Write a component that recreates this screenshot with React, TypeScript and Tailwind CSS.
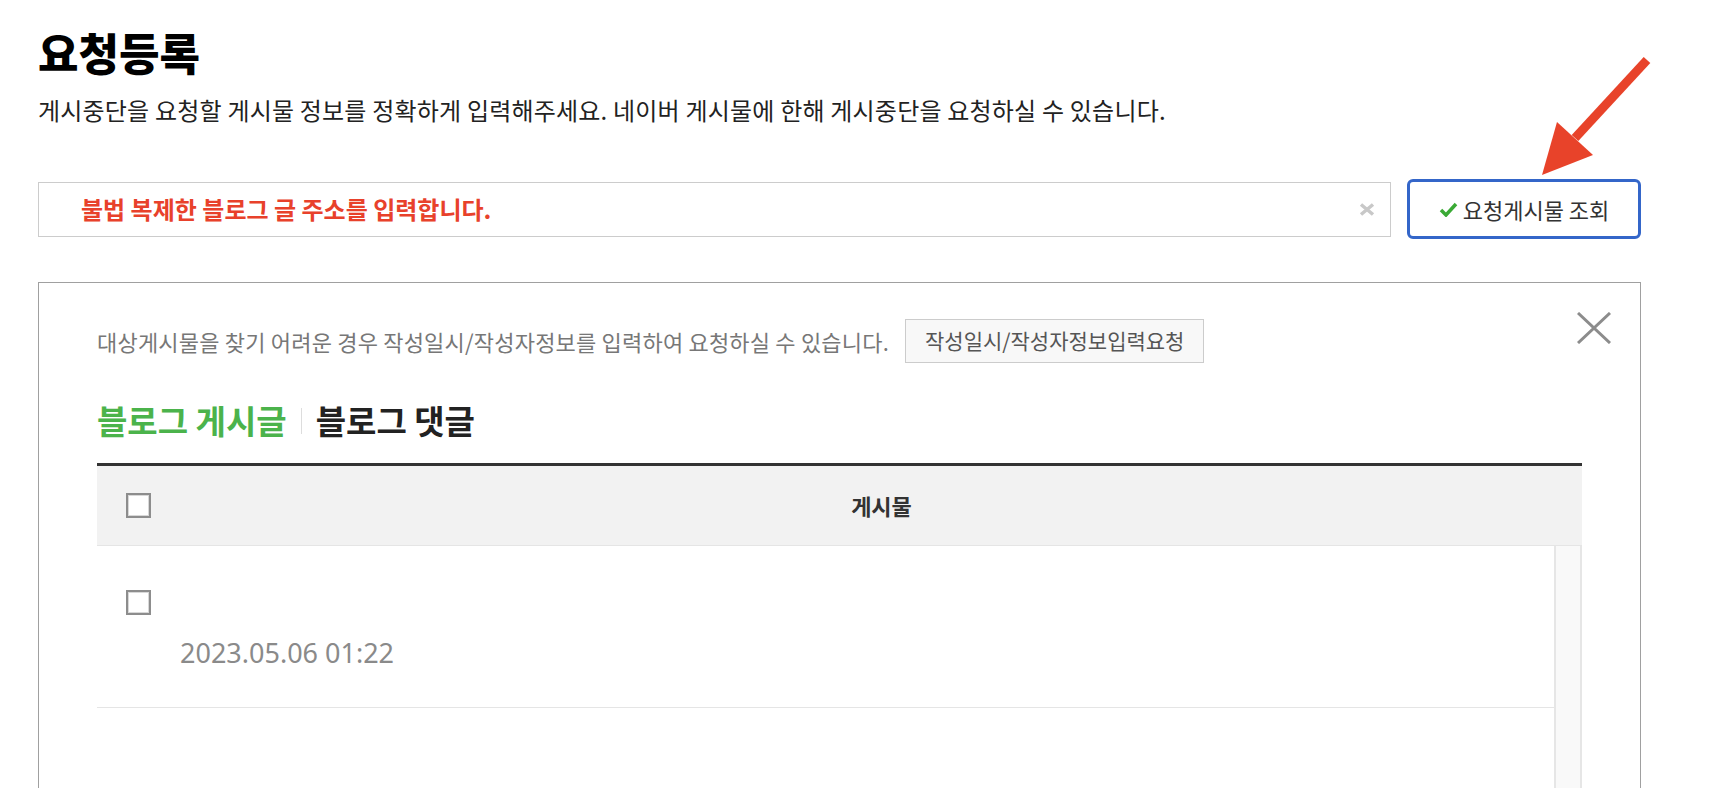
import React from "react";

function Checkbox() {
  return (
    <div className="w-[25px] h-[25px] border-2 border-[#8d8d8d] bg-white shadow-[inset_0_0_0_1px_#d8d8d8]" />
  );
}

export default function App() {
  return (
    <div className="relative min-h-screen bg-white pl-[38px] pr-[71px] pt-[22px] text-[#222] font-['Noto_Sans_CJK_KR','Noto_Sans',sans-serif]">
      {/* Header */}
      <h1 className="text-[44px] font-extrabold leading-[60px] text-black">요청등록</h1>
      <p className="mt-[13px] text-[24px] leading-[30px] tracking-[0.2px] text-[#222]">
        게시중단을 요청할 게시물 정보를 정확하게 입력해주세요. 네이버 게시물에 한해 게시중단을 요청하실 수 있습니다.
      </p>

      {/* URL input row */}
      <div className="mt-[54px] flex h-[60px] items-center gap-[16px]">
        <div className="flex h-[55px] flex-1 items-center border border-[#cccccc] pl-[42px] pr-[15px]">
          <span className="text-[24px] font-bold text-[#e8412b]">불법 복제한 블로그 글 주소를 입력합니다.</span>
          <svg className="ml-auto" width="16" height="13" viewBox="0 0 16 13">
            <path d="M2 1.5 L14 11.5 M14 1.5 L2 11.5" stroke="#c8c8c8" strokeWidth="3.5" />
          </svg>
        </div>
        <button className="flex h-[60px] w-[234px] items-center justify-center gap-[5px] rounded-[6px] border-[3px] border-[#3466c9] bg-white text-[22px] text-[#333]">
          <svg width="19" height="15" viewBox="0 0 19 15">
            <path d="M2 8 L7 13 L17 2" fill="none" stroke="#3aaa35" strokeWidth="3.5" />
          </svg>
          요청게시물 조회
        </button>
      </div>

      {/* Result panel */}
      <div className="relative mt-[43px] border border-[#a0a0a0] px-[58px] pt-[36px]">
        <button className="absolute right-[29px] top-[29px]">
          <svg width="34" height="32" viewBox="0 0 34 32">
            <path d="M1 1 L33 31 M33 1 L1 31" stroke="#8c8c8c" strokeWidth="3" />
          </svg>
        </button>

        <div className="flex items-center gap-[16px]">
          <p className="text-[22px] tracking-[0.2px] text-[#777]">대상게시물을 찾기 어려운 경우 작성일시/작성자정보를 입력하여 요청하실 수 있습니다.</p>
          <button className="h-[44px] border border-[#cccccc] bg-[#f8f8f8] px-[19px] text-[21px] text-[#555]">
            작성일시/작성자정보입력요청
          </button>
        </div>

        {/* Tabs */}
        <div className="mt-[38px] flex h-[40px] items-center text-[33px] font-bold">
          <span className="text-[#4bb34b]">블로그 게시글</span>
          <span className="mx-[14px] h-[26px] w-px bg-[#dddddd]" />
          <span className="text-[#222]">블로그 댓글</span>
        </div>

        {/* Table */}
        <div className="mt-[22px] border-t-[3px] border-[#333]">
          <div className="flex h-[80px] items-center border-b border-[#e5e5e5] bg-[#f2f2f2]">
            <div className="w-[84px] pl-[29px]">
              <Checkbox />
            </div>
            <div className="flex-1 text-center text-[22px] font-bold text-[#333]">게시물</div>
          </div>
          <div className="flex h-[300px]">
            <div className="flex-1">
              <div className="h-[162px] border-b border-[#e5e5e5] pl-[29px] pt-[44px]">
                <Checkbox />
                <p className="mt-[20px] pl-[54px] font-['Noto_Sans',sans-serif] text-[27px] leading-[36px] text-[#8a8a8a]">
                  2023.05.06 01:22
                </p>
              </div>
            </div>
            <div className="w-[28px] border-x-2 border-[#e6e6e6] bg-[#f9f9f9]" />
          </div>
        </div>
      </div>

      {/* Annotation arrow */}
      <svg className="pointer-events-none absolute left-[1530px] top-[50px]" width="130" height="135" viewBox="0 0 130 135">
        <path d="M117 10 L45 88" stroke="#e8432a" strokeWidth="9" />
        <path d="M12 125 L27 72 L63 105 Z" fill="#e8432a" />
      </svg>
    </div>
  );
}
